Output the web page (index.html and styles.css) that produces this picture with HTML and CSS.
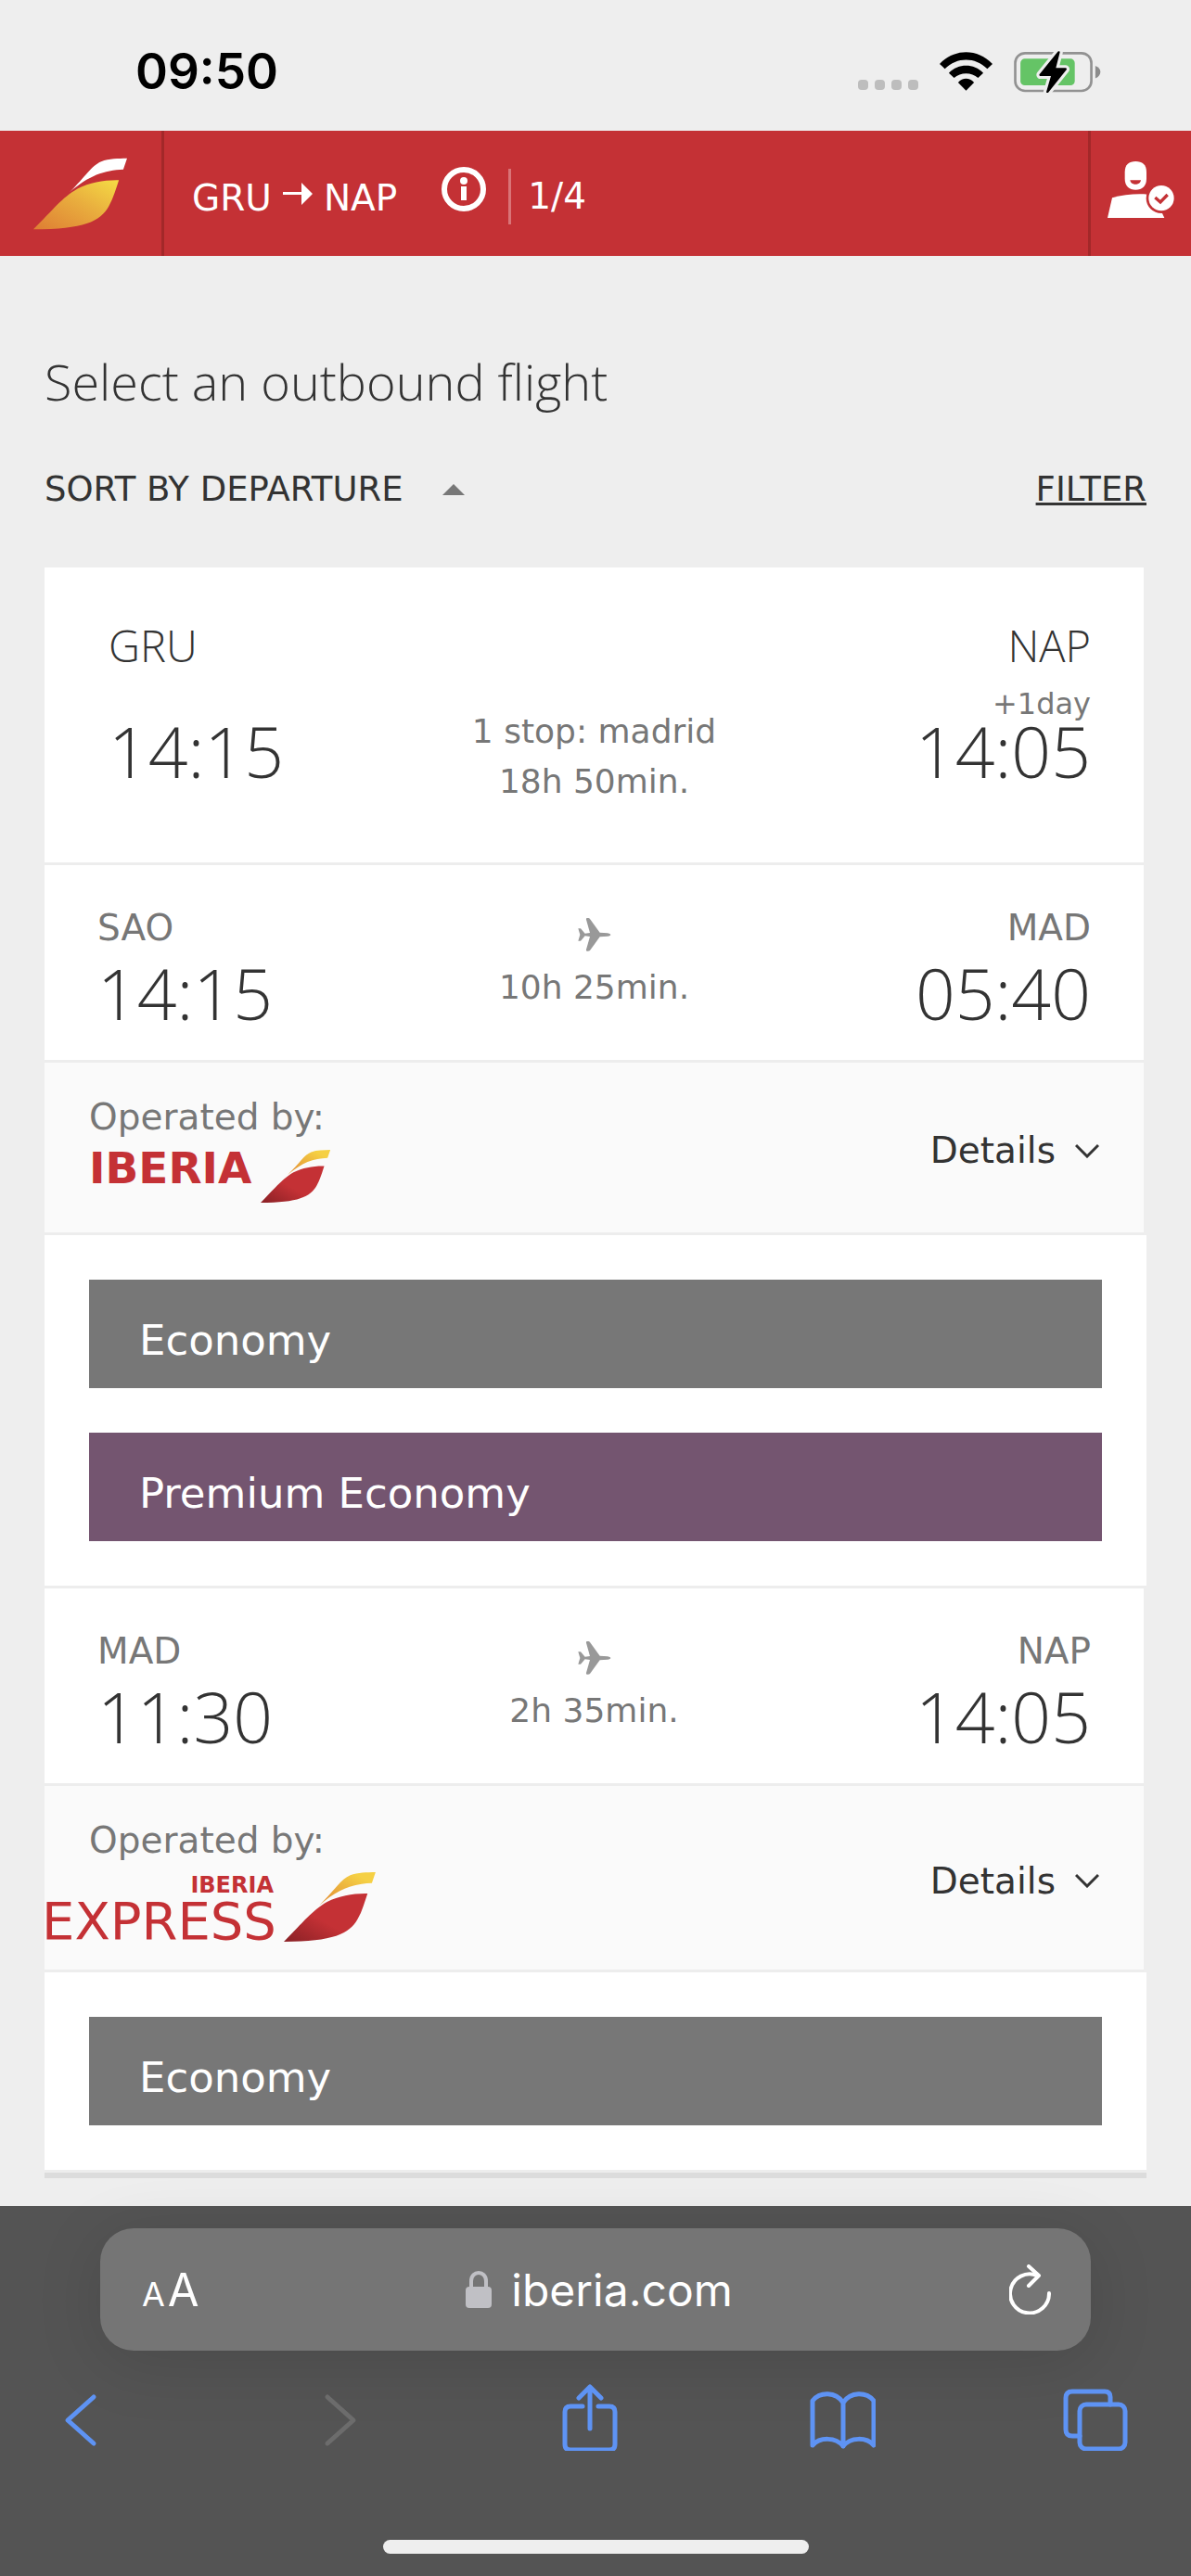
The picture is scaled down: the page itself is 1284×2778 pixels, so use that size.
FILE: index.html
```
<!DOCTYPE html>
<html lang="en">
<head>
  <meta charset="UTF-8">
  <meta name="viewport" content="width=device-width, initial-scale=1">
  <title>Select an outbound flight - Iberia</title>
  <link rel="stylesheet" href="styles.css">
</head>
<body>
  <div class="status-bar">
    <span class="clock">09:50</span>
    <div class="status-icons">
      <div class="signal"><i></i><i></i><i></i><i></i></div>
      <svg class="wifi" viewBox="399 100 172 128" aria-hidden="true">
        <path d="M399 141C447 90 523 90 571 141L554 157C514 118 456 118 416 157Z"/>
        <path d="M429 171C460 139 510 139 541 171L524 187C503 167 467 167 446 187Z"/>
        <path d="M459 202C474 185 496 185 511 202L485 228Z"/>
      </svg>
      <svg class="battery" viewBox="639 98 283 136" aria-hidden="true">
        <rect x="643" y="105" width="248" height="123" rx="32" fill="none" stroke="#929292" stroke-width="8"/>
        <rect x="660" y="123" width="177" height="87" rx="14" fill="#65c466"/>
        <path d="M904 146C926 153 926 179 904 187Z" fill="#8c8c8c"/>
        <path d="M785 102L725 176H764L748 231L807 157H771Z" fill="#000" stroke="#eee" stroke-width="26" stroke-linejoin="round"/>
        <path d="M785 102L725 176H764L748 231L807 157H771Z" fill="#000" stroke="#000" stroke-width="7" stroke-linejoin="round"/>
      </svg>
    </div>
  </div>

  <header class="header">
    <a class="home-link" href="#" aria-label="Iberia home">
      <svg class="header-logo" viewBox="0 0 297 225" aria-hidden="true">
        <defs>
          <linearGradient id="gold" x1="0" y1="1" x2="1" y2="0">
            <stop offset="0" stop-color="#de7d33"/>
            <stop offset="0.55" stop-color="#e9ae3e"/>
            <stop offset="1" stop-color="#f5dc45"/>
          </linearGradient>
          <linearGradient id="yellow" x1="0" y1="1" x2="1" y2="0">
            <stop offset="0.2" stop-color="#e59a38"/>
            <stop offset="0.8" stop-color="#f5d044"/>
          </linearGradient>
          <linearGradient id="red" x1="0" y1="1" x2="1" y2="0">
            <stop offset="0.05" stop-color="#8f2227"/>
            <stop offset="0.45" stop-color="#c43135"/>
          </linearGradient>
        </defs>
        <path d="M115 107C165 58 185 22 215 10C240 0 268 1 297 0L285 35C225 37 175 55 115 107Z" fill="#fff"/>
        <path d="M0 225C65 160 90 125 140 96C180 76 225 68 271 69C262 95 254 126 239 152C212 200 160 225 0 225Z" fill="url(#gold)"/>
      </svg>
    </a>
    <div class="trip">
      <span class="route">
        GRU
        <svg class="arrow" viewBox="0 0 32 24" aria-label="to"><path d="M0 10H20V0L32 12L20 24V13H0Z" fill="#fff"/></svg>
        NAP
      </span>
      <button class="info" type="button" aria-label="Flight information">
        <svg viewBox="0 0 48 48" aria-hidden="true">
          <circle cx="24" cy="24" r="21" fill="none" stroke="#fff" stroke-width="6"/>
          <circle cx="24" cy="15" r="4" fill="#fff"/>
          <rect x="21" y="21" width="6" height="15" fill="#fff"/>
        </svg>
      </button>
      <span class="step">1/4</span>
    </div>
    <button class="user" type="button" aria-label="My account">
      <svg viewBox="0 0 216 183" aria-hidden="true">
        <path d="M0 183L15 118C60 103 125 103 150 110L184 183Z" fill="#fff"/>
        <path d="M56 35C56 10 70 0 91 0S126 10 126 35V56C126 80 112 92 91 92S56 80 56 56Z" fill="#fff"/>
        <path d="M73 61H108C106 79 75 79 73 61Z" fill="#c43135"/>
        <circle cx="174" cy="119" r="49" fill="#c43135"/>
        <circle cx="174" cy="119" r="41" fill="#fff"/>
        <path d="M154 117L171 132L194 108" fill="none" stroke="#c43135" stroke-width="10"/>
      </svg>
    </button>
  </header>

  <main>
    <h1>Select an outbound flight</h1>
    <div class="tools">
      <button class="sort" type="button">SORT BY DEPARTURE <span class="caret"></span></button>
      <a class="filter" href="#">FILTER</a>
    </div>

    <article class="flight">
      <section class="summary">
        <div class="point">
          <div class="place">GRU</div>
          <div class="time">14:15</div>
        </div>
        <div class="middle">1 stop: madrid<br>18h 50min.</div>
        <div class="point arrival">
          <div class="place">NAP</div>
          <div class="day">+1day</div>
          <div class="time">14:05</div>
        </div>
      </section>

      <section class="leg">
        <div class="point">
          <div class="city">SAO</div>
          <div class="time">14:15</div>
        </div>
        <div class="middle">
          <svg class="plane" viewBox="0 0 106 108" aria-hidden="true"><path d="M28 0Q35 -1 38 3L70 47L95 49Q105 51 105 54Q105 58 95 59L70 61L38 105Q35 108 28 107Q25 106 26 102L38 60L22 58L8 74H0L6 54L0 34H8L22 50L38 48L26 5Q25 1 28 0Z"/></svg>
          <div>10h 25min.</div>
        </div>
        <div class="point arrival">
          <div class="city">MAD</div>
          <div class="time">05:40</div>
        </div>
      </section>
      <section class="operator">
        <div>
          <div class="label">Operated by:</div>
          <svg class="airline" width="260" height="60" viewBox="0 0 260 60" role="img" aria-label="Iberia">
            <text x="0" y="37" class="brand">IBERIA</text>
            <g transform="translate(185 1) scale(0.253)">
              <path d="M115 107C165 58 185 22 215 10C240 0 268 1 297 0L285 35C225 37 175 55 115 107Z" fill="url(#yellow)"/>
              <path d="M0 225C65 160 90 125 140 96C180 76 225 68 271 69C262 95 254 126 239 152C212 200 160 225 0 225Z" fill="url(#red)"/>
            </g>
          </svg>
        </div>
        <button class="details" type="button">Details
          <svg viewBox="0 0 26 16" aria-hidden="true"><path d="M1 2L13 14L25 2"/></svg>
        </button>
      </section>
      <section class="fares">
        <button class="fare" type="button">Economy</button>
        <button class="fare premium" type="button">Premium Economy</button>
      </section>

      <section class="leg">
        <div class="point">
          <div class="city">MAD</div>
          <div class="time">11:30</div>
        </div>
        <div class="middle">
          <svg class="plane" viewBox="0 0 106 108" aria-hidden="true"><path d="M28 0Q35 -1 38 3L70 47L95 49Q105 51 105 54Q105 58 95 59L70 61L38 105Q35 108 28 107Q25 106 26 102L38 60L22 58L8 74H0L6 54L0 34H8L22 50L38 48L26 5Q25 1 28 0Z"/></svg>
          <div>2h 35min.</div>
        </div>
        <div class="point arrival">
          <div class="city">NAP</div>
          <div class="time">14:05</div>
        </div>
      </section>
      <section class="operator">
        <div>
          <div class="label">Operated by:</div>
          <svg class="airline express" width="357" height="75" viewBox="0 0 357 75" role="img" aria-label="Iberia Express">
            <text x="247" y="22" class="brand-small" text-anchor="end">IBERIA</text>
            <text x="-3" y="72" class="brand-express">EXPRESS</text>
            <g transform="translate(258) scale(0.333)">
              <path d="M115 107C165 58 185 22 215 10C240 0 268 1 297 0L285 35C225 37 175 55 115 107Z" fill="url(#yellow)"/>
              <path d="M0 225C65 160 90 125 140 96C180 76 225 68 271 69C262 95 254 126 239 152C212 200 160 225 0 225Z" fill="url(#red)"/>
            </g>
          </svg>
        </div>
        <button class="details" type="button">Details
          <svg viewBox="0 0 26 16" aria-hidden="true"><path d="M1 2L13 14L25 2"/></svg>
        </button>
      </section>
      <section class="fares">
        <button class="fare" type="button">Economy</button>
      </section>
    </article>
  </main>

  <footer class="browser-bar">
    <div class="address">
      <button class="text-size" type="button" aria-label="Text size"><small>A</small>A</button>
      <button class="url" type="button">
        <svg class="lock" viewBox="0 0 28 40" aria-hidden="true">
          <rect y="17" width="28" height="23" rx="4" fill="#c0c0c5"/>
          <path d="M6 18V11C6 -1 22 -1 22 11V18" fill="none" stroke="#c0c0c5" stroke-width="4"/>
        </svg>
        iberia.com
      </button>
      <button class="reload" type="button" aria-label="Reload">
        <svg viewBox="0 0 45 54" aria-hidden="true">
          <path d="M43 31A21 21 0 1 1 30 12" /><path d="M21 2L32 12L21 23"/>
        </svg>
      </button>
    </div>
    <nav class="browser-nav">
      <button type="button" aria-label="Back"><svg viewBox="0 0 72 72"><path d="M50 14L22 39L50 64"/></svg></button>
      <button type="button" aria-label="Forward" disabled><svg viewBox="0 0 72 72"><path d="M28 14L56 39L28 64"/></svg></button>
      <button type="button" aria-label="Share"><svg viewBox="0 0 72 72"><path d="M29 24H16Q10 24 10 30V65Q10 71 16 71H58Q64 71 64 65V30Q64 24 58 24H46"/><path d="M37 48V4M25 15L37 3L49 15"/></svg></button>
      <button type="button" aria-label="Bookmarks"><svg viewBox="0 0 72 72"><path d="M37 20C29 8 12 8 4 18V66C12 57 29 57 37 67C45 57 62 57 70 66V18C62 8 45 8 37 20V67"/></svg></button>
      <button type="button" aria-label="Tabs"><svg viewBox="0 0 72 72"><rect x="18" y="22" width="49" height="48" rx="7"/><path d="M18 56H10Q3 56 3 49V15Q3 8 10 8H45Q51 8 51 14V22"/></svg></button>
    </nav>
    <div class="home-indicator"></div>
  </footer>
</body>
</html>
```
FILE: styles.css
```
* {
  box-sizing: border-box;
}
body {
  margin: 0;
  min-height: 100vh;
  display: flex;
  flex-direction: column;
  background: #eee;
  color: #333;
  font-family: "DejaVu Sans", Verdana, sans-serif;
}
button {
  padding: 0;
  border: none;
  background: none;
  color: inherit;
  font: inherit;
  text-align: left;
  cursor: pointer;
}
svg {
  display: block;
}

/* phone status bar */
.status-bar {
  display: flex;
  justify-content: space-between;
  align-items: center;
  padding: 47px 97px 34px 146px;
}
.clock {
  font: 600 53px/60px Inter, sans-serif;
  color: #000;
}
.status-icons {
  display: flex;
  align-items: flex-end;
  gap: 23px;
}
.signal {
  display: flex;
  gap: 7px;
  margin-bottom: 3px;
}
.signal i {
  width: 11px;
  height: 11px;
  border-radius: 4px;
  background: #bdbdbd;
}
.wifi {
  width: 57px;
  height: 43px;
  margin-bottom: 2px;
}
.battery {
  width: 94px;
  height: 45px;
}

/* red header */
.header {
  display: flex;
  align-items: stretch;
  height: 135px;
  background: #c43135;
  color: #fff;
}
.home-link {
  width: 177px;
  padding: 29px 36px;
  border-right: 3px solid #a32829;
}
.header-logo {
  width: 101px;
  height: 78px;
}
.trip {
  flex: 1;
  display: flex;
  align-items: center;
  padding: 6px 0 0 30px;
  font-size: 39px;
}
.route {
  display: flex;
  align-items: center;
  gap: 12px;
  padding-top: 3px;
}
.arrow {
  width: 32px;
  height: 24px;
  margin-bottom: 9px;
}
.info {
  margin: 0 24px 15px 48px;
}
.info svg {
  width: 48px;
  height: 48px;
}
.step {
  padding-left: 18px;
  border-left: 3px solid #d97477;
  line-height: 60px;
}
.user {
  width: 111px;
  padding: 0 18px 8px;
  border-left: 3px solid #a32829;
}
.user svg {
  width: 72px;
  height: 61px;
}

main {
  flex: 1;
  padding: 99px 48px 0;
}
h1 {
  margin: 0 0 57px;
  font: 300 54px/72px "Open Sans", sans-serif;
}
.tools {
  display: flex;
  justify-content: space-between;
  margin-bottom: 60px;
  font-size: 37px;
  line-height: 48px;
}
.sort {
  display: flex;
  align-items: center;
  gap: 42px;
}
.caret {
  border: 12px solid transparent;
  border-top: none;
  border-bottom-color: #777;
}
.filter {
  color: #333;
}

/* flight card */
.flight {
  margin-right: 3px;
  background: #fff;
}
.summary, .leg {
  display: grid;
  grid-template-columns: 1fr auto 1fr;
  align-items: start;
  border-bottom: 3px solid #ededed;
}
.summary {
  padding: 54px 57px 60px;
}
.summary .point {
  padding-left: 12px;
}
.leg {
  padding: 42px 57px 36px;
}
.arrival {
  text-align: right;
}
.place {
  font: 300 47px/60px "Open Sans", sans-serif;
}
.city {
  margin-bottom: 9px;
  font-size: 39px;
  line-height: 51px;
  color: #777;
}
.time {
  font: 300 75px/72px "Open Sans", sans-serif;
}
.place + .time {
  margin-top: 48px;
}
.day {
  margin: 15px 0 -3px;
  font-size: 32px;
  line-height: 36px;
  color: #777;
}
.middle {
  font-size: 36px;
  line-height: 54px;
  text-align: center;
  color: #777;
}
.summary .middle {
  margin-top: 96px;
}
.plane {
  width: 36px;
  height: 36px;
  margin: 15px auto 12px;
  fill: #999;
}

.operator {
  display: flex;
  justify-content: space-between;
  align-items: center;
  padding: 33px 48px 30px;
  border-bottom: 3px solid #ededed;
  background: #fafafa;
  font-size: 39px;
  line-height: 51px;
}
.label {
  color: #777;
}
.airline {
  margin-top: 9px;
  overflow: visible;
}
.express {
  margin-left: -48px;
}
.brand, .brand-small, .brand-express {
  fill: #c43135;
}
.brand {
  font-size: 47px;
  font-weight: bold;
}
.brand-small {
  font-size: 24px;
  font-weight: bold;
}
.brand-express {
  font-size: 56px;
}
.details {
  display: flex;
  align-items: center;
  gap: 21px;
  padding-top: 3px;
}
.details svg {
  width: 26px;
  height: 16px;
  fill: none;
  stroke: #333;
  stroke-width: 3;
}

.fares {
  display: flex;
  flex-direction: column;
  gap: 48px;
  margin-right: -3px;
  padding: 48px;
  border-bottom: 3px solid #ededed;
  background: #fff;
}
.fares:last-child {
  box-shadow: 0 6px 0 #dcdcdc;
}
.fare {
  padding: 36px 54px 21px;
  background: #777;
  color: #fff;
  font-size: 45px;
  line-height: 60px;
}
.premium {
  background: #745570;
}

/* browser toolbar */
.browser-bar {
  padding: 24px 0;
  background: #545454;
  color: #fff;
  font-family: Inter, sans-serif;
}
.address {
  display: grid;
  grid-template-columns: 1fr auto 1fr;
  align-items: center;
  height: 132px;
  margin: 0 108px;
  padding: 0 43px 0 45px;
  border-radius: 36px;
  background: #757575;
  box-shadow: 0 12px 72px rgba(0, 0, 0, 0.12);
}
.text-size {
  font-size: 49px;
}
.text-size small {
  margin-right: 3px;
  font-size: 36px;
}
.url {
  display: flex;
  align-items: center;
  gap: 21px;
  padding-left: 6px;
  font-size: 48px;
}
.lock {
  width: 28px;
  height: 40px;
}
.reload {
  justify-self: end;
}
.reload svg {
  width: 45px;
  height: 54px;
  fill: none;
  stroke: #fff;
  stroke-width: 4;
  stroke-linecap: round;
  stroke-linejoin: round;
}
.browser-nav {
  display: flex;
  justify-content: space-between;
  margin: 36px 66px 96px 51px;
}
.browser-nav svg {
  width: 72px;
  height: 72px;
  fill: none;
  stroke: #5e93f4;
  stroke-width: 5;
  stroke-linecap: round;
  stroke-linejoin: round;
}
.browser-nav button:disabled svg {
  stroke: #6c6c6c;
}
.home-indicator {
  width: 459px;
  height: 15px;
  margin: 0 auto;
  border-radius: 8px;
  background: #eee;
}
```
